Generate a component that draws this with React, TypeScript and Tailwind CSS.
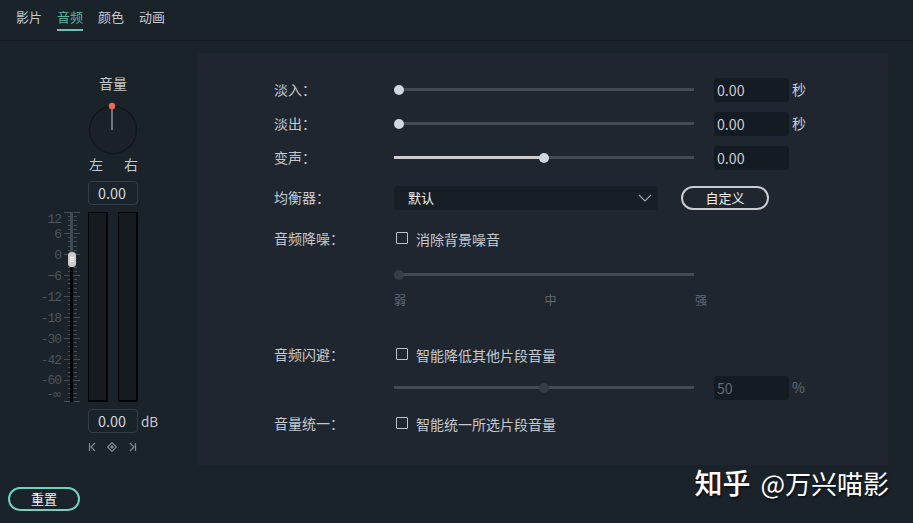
import React from "react";

const TABS = ["影片", "音频", "颜色", "动画"];

function Slider({ value, fill, disabled }: { value: number; fill?: boolean; disabled?: boolean }) {
  return (
    <div className="relative h-[10px] w-[300px] shrink-0">
      <div className="mt-[3px] h-[3px] w-full bg-[#434a53]">
        {fill && <div className="h-full bg-[#cdcdcd]" style={{ width: `${value}%` }} />}
      </div>
      <div
        className={`absolute top-0 size-[10px] rounded-full ${disabled ? "bg-[#353d47]" : "bg-[#cfd7e0]"}`}
        style={{ left: value === 0 ? 0 : value * 3 - 5 }}
      />
    </div>
  );
}

function NumberField({ value, unit, disabled }: { value: string; unit?: string; disabled?: boolean }) {
  return (
    <div className={`ml-5 flex items-center ${disabled ? "text-[#656b72]" : "text-[#c9ced3]"}`}>
      <div className="h-6 w-[75px] rounded-[4px] bg-[#151b22] pl-[3px] text-[14.2px] leading-6">{value}</div>
      {unit && <span className="-mt-[2px] ml-[3px] leading-5">{unit}</span>}
    </div>
  );
}

function Row({ label, className, children }: { label?: string; className: string; children: React.ReactNode }) {
  return (
    <div className={`flex items-center ${className}`}>
      <div className="-mt-[2px] w-[120px] shrink-0 leading-5">{label}</div>
      {children}
    </div>
  );
}

function Check({ label }: { label: string }) {
  return (
    <label className="flex items-center pl-[2px]">
      <span className="-mt-[2px] size-3 rounded-[1px] border border-[#bcc3ca]" />
      <span className="ml-2 leading-5">{label}</span>
    </label>
  );
}

const SCALE = [
  { text: "12", y: 7 },
  { text: "6", y: 22 },
  { text: "0", y: 43 },
  { text: "−6", y: 64 },
  { text: "-12", y: 85 },
  { text: "-18", y: 106 },
  { text: "-30", y: 127 },
  { text: "-42", y: 148 },
  { text: "-60", y: 168 },
];

function Fader() {
  return (
    <svg width="44" height="191" viewBox="0 0 44 191" className="shrink-0">
      <g fill="#4d565e" fontFamily="'Liberation Mono', monospace" fontSize="13" letterSpacing="-1" textAnchor="end">
        {SCALE.map((s) => (
          <text key={s.text} x="21" y={s.y + 4}>{s.text}</text>
        ))}
        <text x="22" y="186" fontFamily="'DejaVu Sans', sans-serif" fontSize="12" letterSpacing="0">-∞</text>
      </g>
      <g fill="#464f57">
        {Array.from({ length: 46 }, (_, i) => {
          const y = Math.round(i * 4.2);
          const major = i % 5 === 0;
          return (
            <React.Fragment key={i}>
              <rect x={major ? 24 : 28} y={y} width={major ? 6 : 2} height="1" />
              <rect x="34" y={y} width={major ? 6 : 3} height="1" />
            </React.Fragment>
          );
        })}
      </g>
      <rect x="30" y="0" width="3" height="44" fill="#414950" />
      <rect x="30" y="44" width="3" height="146" fill="#020304" />
      <rect x="28" y="40" width="8" height="15" rx="3.5" fill="#cbcbcb" />
      <path d="M30 45.5h4M30 47.5h4M30 49.5h4" stroke="#fff" />
    </svg>
  );
}

function Meter() {
  return <div className="h-[190px] w-5 border-t border-r-2 border-b-2 border-l border-[#030405] bg-[#161b20]" />;
}

function ValueBox() {
  return (
    <div className="h-6 w-[50px] shrink-0 rounded-[4px] border border-[#353e47] pl-[9px] text-[14.4px] leading-[22px] text-[#d5d9dd]">0.00</div>
  );
}

export default function App() {
  return (
    <div className="flex h-[523px] w-[913px] flex-col overflow-hidden bg-[#1a222a] font-['Noto_Sans_CJK_SC',sans-serif] text-[14px] text-[#c5cad0]">
      <nav className="flex h-[41px] shrink-0 gap-[15px] border-b border-[#141a20] pl-4 text-[13px]">
        {TABS.map((t) => (
          <div
            key={t}
            className={`mt-[7px] h-6 border-b-2 leading-[19px] ${t === "音频" ? "border-[#6ebfb8] text-[#55b5a1]" : "border-transparent"}`}
          >
            {t}
          </div>
        ))}
      </nav>

      <div className="flex h-[424px] shrink-0">
        <aside className="w-[197px] shrink-0 pt-8">
          <div className="pl-[99px] leading-5">音量</div>
          <svg width="50" height="54" viewBox="0 0 50 54" className="mt-2 ml-[88px] block">
            <circle cx="25" cy="29" r="23.5" fill="#1a2129" stroke="#0f151b" strokeWidth="1.3" />
            <rect x="23" y="6" width="2" height="23" fill="#72777c" />
            <circle cx="24" cy="5" r="3.2" fill="#ee6b5c" />
          </svg>
          <div className="-mt-px flex w-[138px] justify-between pl-[89px] leading-5">
            <span>左</span>
            <span>右</span>
          </div>
          <div className="mt-[7px] pl-[88px]"><ValueBox /></div>
          <div className="mt-[7px] flex h-[191px] pl-[40px]">
            <Fader />
            <div className="ml-1 flex gap-[10px]">
              <Meter />
              <Meter />
            </div>
          </div>
          <div className="mt-[6px] flex items-center pl-[88px]">
            <ValueBox />
            <span className="ml-[3px] text-[13.5px] leading-6">dB</span>
          </div>
          <svg width="50" height="12" viewBox="0 0 50 12" fill="none" stroke="#858b91" strokeWidth="1.2" className="mt-2 ml-[88px]">
            <path d="M1.5 2v8M7 2L3 6l4 4M42 2l4 4-4 4M47.5 2v8M24 1.6L28.4 6 24 10.4 19.6 6z" />
            <path d="M24 4L26 6 24 8 22 6z" fill="#858b91" stroke="none" />
          </svg>
        </aside>

        <main className="mt-3 h-[412px] w-[691px] bg-[#1f262f] pt-5 pl-[77px]">
          <Row label="淡入：" className="h-[34px]">
            <Slider value={0} />
            <NumberField value="0.00" unit="秒" />
          </Row>
          <Row label="淡出：" className="h-[34px]">
            <Slider value={0} />
            <NumberField value="0.00" unit="秒" />
          </Row>
          <Row label="变声：" className="h-[34px]">
            <Slider value={50} fill />
            <NumberField value="0.00" />
          </Row>
          <Row label="均衡器：" className="h-[46px]">
            <div className="flex h-6 w-[264px] items-center justify-between rounded-[4px] bg-[#181e25] pr-[6px] pl-[14px] text-[13px] text-[#eef0f2]">
              <span className="leading-5">默认</span>
              <svg width="14" height="8" viewBox="0 0 14 8" fill="none" stroke="#a2a7ac" strokeWidth="1.1">
                <path d="M1 1l6 6 6-6" />
              </svg>
            </div>
            <button className="ml-[23px] h-6 w-[88px] rounded-full border-2 border-[#c9cbcd] text-[13px] leading-5 text-[#eef0f2]">自定义</button>
          </Row>
          <Row label="音频降噪：" className="h-9">
            <Check label="消除背景噪音" />
          </Row>
          <Row className="h-[36px]">
            <Slider value={0} disabled />
          </Row>
          <Row className="h-[14px] text-[12px] text-[#646a72]">
            <div className="flex w-[313px] justify-between leading-[14px]">
              <span>弱</span>
              <span>中</span>
              <span>强</span>
            </div>
          </Row>
          <Row label="音频闪避：" className="mt-[31px] h-[34px]">
            <Check label="智能降低其他片段音量" />
          </Row>
          <Row className="h-8">
            <Slider value={50} disabled />
            <NumberField value="50" unit="%" disabled />
          </Row>
          <Row label="音量统一：" className="h-10">
            <Check label="智能统一所选片段音量" />
          </Row>
        </main>
      </div>

      <footer className="flex h-[58px] justify-between pr-6 pl-2">
        <button className="mt-[22px] h-6 w-[72px] rounded-full border-2 border-[#70d2bb] text-[13px] leading-5 text-[#eef0f2]">重置</button>
        <div className="-mt-[3px] flex h-10 items-center text-[26px] whitespace-nowrap text-white [text-shadow:1px_2px_2px_#0008]">
          <span className="mr-[10px] text-[28px] font-medium">知乎</span>
          <span>@万兴喵影</span>
        </div>
      </footer>
    </div>
  );
}
